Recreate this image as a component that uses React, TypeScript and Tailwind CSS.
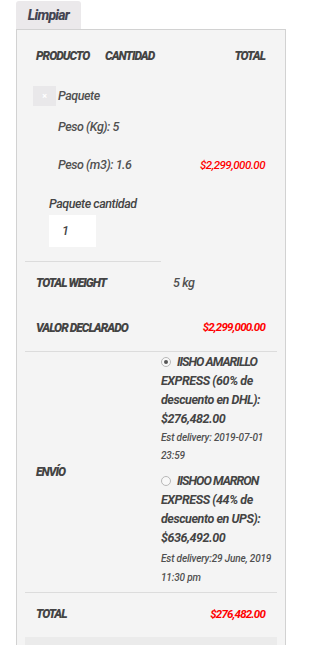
const F = { fontFamily: 'Roboto, "Liberation Sans", sans-serif' }

function Radio({ checked }: { checked?: boolean }) {
  return (
    <span className="relative top-[-1px] mr-[6px] inline-flex h-[10px] w-[10px] shrink-0 items-center justify-center rounded-full border border-[#b8b8b8] bg-[#f8f8f8] align-middle">
      {checked && <span className="h-[4px] w-[4px] rounded-full bg-[#555]" />}
    </span>
  )
}

export default function App() {
  return (
    <div className="min-h-[645px] w-[290px] overflow-hidden bg-white italic text-[#505050]" style={F}>
      <div className="pl-4 pt-px">
        <button className="h-[28px] w-[65px] rounded-t-[3px] bg-[#ebe9eb] text-[14px] font-extrabold italic tracking-[-0.7px] text-[#444452]">Limpiar</button>
      </div>
      <div className="ml-4 w-[270px] border border-[#d2d2d2] bg-[#f4f4f4] px-2">
        {/* encabezado */}
        <div className="flex h-[52px] items-center pl-[11px] pr-[12px] text-[12px] font-black uppercase tracking-[-1px] text-[#444]">
          <span className="w-[69px]">Producto</span>
          <span>Cantidad</span>
          <span className="ml-auto">Total</span>
        </div>

        {/* producto */}
        <div className="pt-[4px] text-[12.5px] font-medium leading-[18px] tracking-[-0.45px]">
          <div className="flex items-center">
            <span className="ml-[8px] flex h-[20px] w-[23px] items-center justify-center bg-[#e9e8ea] text-[9px] font-bold not-italic text-white">×</span>
            <span className="ml-[2px]">Paquete</span>
          </div>
          <div className="ml-[33px] mt-[12px]">Peso (Kg): 5</div>
          <div className="mt-[20px] flex items-center pr-[12px]">
            <span className="ml-[33px]">Peso (m3): 1.6</span>
            <span className="ml-auto text-[11.5px] tracking-[-0.5px] text-[#ff0000]">$2,299,000.00</span>
          </div>
          <div className="ml-[24px] mt-[21px] text-[#444]">Paquete cantidad</div>
          <div className="ml-[24px] mt-[2px] flex h-[32px] w-[47px] items-center bg-white pl-[13px] text-[#444]">1</div>
        </div>

        <div className="mt-[14px] w-[136px] border-t border-[#dcdcdc]" />

        {/* totales */}
        <div className="flex h-[42px] items-center pl-[11px]">
          <span className="w-[137px] text-[12px] font-black uppercase tracking-[-1px] text-[#444]">Total weight</span>
          <span className="text-[12.5px] font-medium tracking-[-0.4px]">5 kg</span>
        </div>
        <div className="flex h-[47px] items-center pl-[11px] pr-[12px] font-bold">
          <span className="text-[12px] font-black uppercase tracking-[-1px] text-[#444]">Valor declarado</span>
          <span className="ml-auto text-[11.5px] tracking-[-0.8px] text-[#ff0000]">$2,299,000.00</span>
        </div>

        <div className="border-t border-[#dcdcdc]" />

        {/* envío */}
        <div className="flex items-center">
          <span className="w-[136px] pl-[11px] text-[12px] font-black uppercase tracking-[-1px] text-[#444]">Envío</span>
          <div className="w-[115px] whitespace-nowrap pb-[5px]">
            <div className="text-[12.5px] font-bold leading-[19px] tracking-[-0.45px] text-[#444]">
              <div><Radio checked /><span className="tracking-[-1px]">IISHO AMARILLO</span></div>
              <div>EXPRESS (60% de</div>
              <div>descuento en DHL):</div>
              <div>$276,482.00</div>
            </div>
            <div className="mt-[1px] text-[10px] font-medium leading-[18px] tracking-[-0.15px]">
              <div>Est delivery: 2019-07-01</div>
              <div>23:59</div>
            </div>
            <div className="mt-[6px] text-[12.5px] font-bold leading-[19px] tracking-[-0.45px] text-[#444]">
              <div><Radio /><span className="tracking-[-1px]">IISHOO MARRON</span></div>
              <div>EXPRESS (44% de</div>
              <div>descuento en UPS):</div>
              <div>$636,492.00</div>
            </div>
            <div className="mt-[2px] text-[10px] font-medium leading-[19px] tracking-[-0.15px]">
              <div>Est delivery:29 June, 2019</div>
              <div>11:30 pm</div>
            </div>
          </div>
        </div>

        <div className="border-t border-[#dcdcdc]" />

        <div className="flex h-[44px] items-start pl-[11px] pr-[12px] pt-[12px] font-bold leading-[18px]">
          <span className="text-[12px] font-black uppercase tracking-[-1px] text-[#444]">Total</span>
          <span className="ml-auto text-[11.5px] tracking-[-0.8px] text-[#ff0000]">$276,482.00</span>
        </div>
        <div className="h-[12px] bg-[#ebebeb]" />
      </div>
    </div>
  )
}
